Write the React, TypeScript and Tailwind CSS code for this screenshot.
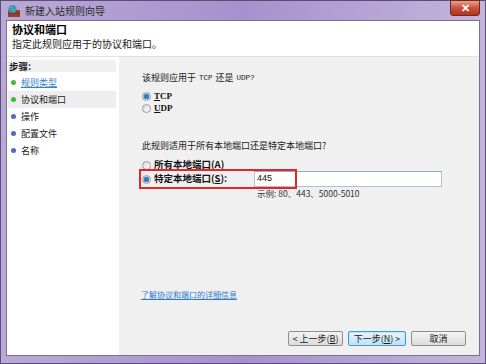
import React from 'react';

const cjk = { fontFamily: '"Noto Sans CJK SC", "Liberation Sans", sans-serif' };
const mono = { fontFamily: '"Liberation Mono", monospace' };

const steps = [
   { label: '规则类型', done: true, link: true },
   { label: '协议和端口', done: true, current: true },
   { label: '操作' },
   { label: '配置文件' },
   { label: '名称' },
];

const Radio = ({ checked }: { checked?: boolean }) => (
   <span className="w-[9px] h-[9px] rounded-full border border-[#9a9a9a] bg-gradient-to-br from-[#d8d8d8] to-white flex items-center justify-center shrink-0">
      {checked && <span className="w-[5px] h-[5px] rounded-full bg-[#2f7fc8] shadow-[0_0_1px_#0b4f8f]" />}
   </span>
);

const FirewallIcon = () => (
   <svg width="14" height="14" viewBox="0 0 14 14">
      <rect x="1" y="6" width="12" height="7" fill="#a0442a" />
      <path d="M1 9.5h12M4 6v3.5M9 6v3.5M6.5 9.5V13M11 9.5V13M2.5 9.5V13" stroke="#6e2a18" strokeWidth="0.6" />
      <circle cx="5.5" cy="5" r="4" fill="#3a8fd6" />
      <path d="M3 3.5c1-.8 2-.6 2.5.2.4.8-.4 1.3.3 2 .6.6 1.8.2 2.4 1" stroke="#5cc04a" strokeWidth="1.4" fill="none" />
   </svg>
);

const Button = ({ children, primary }: { children: React.ReactNode; primary?: boolean }) => (
   <button
      className={`h-[15px] rounded-[2px] border text-[9px] leading-none flex items-center justify-center text-[#1a1a1a] ${
         primary
            ? 'w-[58px] border-[#3c9ad8] bg-gradient-to-b from-[#eaf6fd] to-[#bfe0f5] shadow-[inset_0_0_0_1px_#bfe6fb]'
            : 'w-[55px] border-[#8e8f8f] bg-gradient-to-b from-[#f4f4f4] to-[#dcdcdc]'
      }`}
      style={cjk}
   >
      {children}
   </button>
);

export default function App() {
   return (
      <div
         className="w-[486px] h-[364px] flex flex-col px-[5px] pb-[7px] border border-[#5b4d7a] bg-gradient-to-r from-[#b9a9d6] via-[#a791cc] to-[#c2b5dc]"
         style={cjk}
      >
         <div className="h-[19px] flex items-center relative shrink-0">
            <div className="flex items-center gap-[4px] pl-[1px]">
               <FirewallIcon />
               <span className="text-[10px] text-[#2a2a2a] leading-none">新建入站规则向导</span>
            </div>
            <div className="absolute right-[0px] top-[-1px] w-[30px] h-[16px] rounded-b-[3px] border border-[#6d2a22] bg-gradient-to-b from-[#e8a090] via-[#c9503c] to-[#b8301c] flex items-center justify-center">
               <span className="text-white text-[11px] font-bold leading-none" style={{ fontFamily: '"Liberation Sans", sans-serif' }}>
                  ✕
               </span>
            </div>
         </div>
         <div className="flex-1 flex flex-col bg-white border border-[#7b6f92]">
            <div className="h-[36px] shrink-0 border-b border-[#dfe4e8] pl-[5px] pt-[1px] flex flex-col">
               <span className="text-[11px] font-bold leading-[14px] text-black">协议和端口</span>
               <span className="text-[10px] leading-[12px] text-[#1a1a1a] mt-[2px]">指定此规则应用于的协议和端口。</span>
            </div>
            <div className="flex-1 flex">
               <div className="w-[110px] shrink-0 pt-[3px] flex flex-col">
                  <div className="h-[12px] mx-[1px] bg-[#f0f0f0] pl-[1px] text-[9.5px] font-bold leading-[12px] text-[#1a1a1a]">
                     步骤:
                  </div>
                  <div className="flex flex-col mt-[2px]">
                     {steps.map((s) => (
                        <div
                           key={s.label}
                           className={`h-[17px] flex items-center gap-[5px] pl-[3px] mx-[1px] ${s.current ? 'bg-[#eeeeee]' : ''}`}
                        >
                           <span
                              className={`w-[5px] h-[5px] rounded-full ${
                                 s.done ? 'bg-[#44b83a]' : 'bg-[#5668c8]'
                              }`}
                           />
                           <span
                              className={`text-[9px] leading-none ${s.link ? 'text-[#3a7fd0] underline' : 'text-[#1a1a1a]'}`}
                           >
                              {s.label}
                           </span>
                        </div>
                     ))}
                  </div>
               </div>
               <div className="flex-1 ml-[2px] bg-[#f0f0f0] flex flex-col pl-[23px] pr-[13px] relative">
                  <div className="mt-[14px] text-[9px] leading-[14px] text-[#1a1a1a] flex items-center gap-[3px]">
                     <span>该规则应用于</span>
                     <span className="text-[7.5px]" style={mono}>TCP</span>
                     <span>还是</span>
                     <span className="text-[7.5px]" style={mono}>UDP?</span>
                  </div>
                  <div className="mt-[5px] flex items-center gap-[3px] h-[12px]">
                     <Radio checked />
                     <span className="text-[9px] font-bold leading-none text-[#111]" style={{ fontFamily: '"Liberation Serif", serif' }}>
                        <u>T</u>CP
                     </span>
                  </div>
                  <div className="mt-[0px] flex items-center gap-[3px] h-[12px]">
                     <Radio />
                     <span className="text-[9px] font-bold leading-none text-[#111]" style={{ fontFamily: '"Liberation Serif", serif' }}>
                        <u>U</u>DP
                     </span>
                  </div>
                  <div className="mt-[25px] text-[9px] leading-[14px] text-[#1a1a1a]">
                     此规则适用于所有本地端口还是特定本地端口?
                  </div>
                  <div className="mt-[6px] flex items-center gap-[3px] h-[12px]">
                     <Radio />
                     <span className="text-[9.5px] font-bold leading-none text-[#111]">
                        所有本地端口(<u>A</u>)
                     </span>
                  </div>
                  <div className="flex items-center h-[16px] relative">
                     <div className="flex items-center gap-[3px] w-[112px] shrink-0">
                        <Radio checked />
                        <span className="text-[9.5px] font-bold leading-none text-[#111]">
                           特定本地端口(<u>S</u>):
                        </span>
                     </div>
                     <div className="w-[188px] h-[16px] bg-white border border-[#a9c3dc] border-t-[#8eaacc] flex items-center pl-[2px] text-[9px] text-[#111]" style={{ fontFamily: '"Liberation Sans", sans-serif' }}>
                        445
                     </div>
                     <div className="absolute left-[-3px] top-[-2px] w-[158px] h-[20px] border-2 border-[#e3262a]" />
                  </div>
                  <div className="pl-[115px] mt-[0px] text-[8.5px] leading-[12px] text-[#333]">示例: 80、443、5000-5010</div>
                  <div className="mt-auto flex flex-col">
                     <span className="text-[8px] text-[#2f79cf] underline leading-[14px] -ml-[1px]">了解协议和端口的详细信息</span>
                     <div className="mt-[29px] mb-[9px] flex justify-end gap-[5px]">
                        <Button>&lt; 上一步(<u>B</u>)</Button>
                        <Button primary>下一步(<u>N</u>) &gt;</Button>
                        <Button>取消</Button>
                     </div>
                  </div>
               </div>
            </div>
         </div>
      </div>
   );
}
